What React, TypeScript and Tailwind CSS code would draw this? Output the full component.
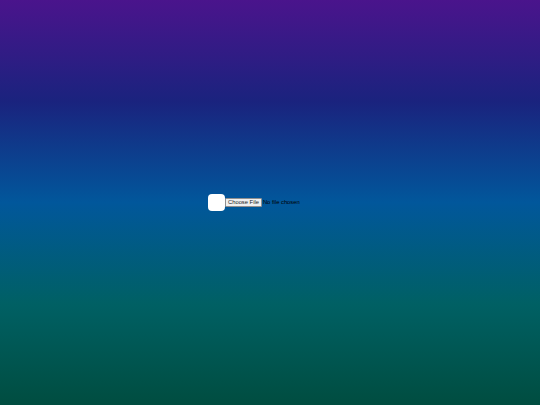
export default function App() {
  return (
    <div className="w-[540px] h-[405px] flex items-center justify-center bg-[linear-gradient(to_bottom,#4a148c_0%,#1a237e_25%,#01579b_50%,#006064_75%,#004d40_100%)]">
      <div className="flex items-center mr-[7px]">
        <div className="w-[17px] h-[17px] rounded-[4px] bg-white" />
        <input
          type="file"
          className="w-[100px] text-[5.8px] leading-none text-black font-['Liberation_Sans',sans-serif] file:mr-[1px] file:h-[9px] file:px-[2px] file:bg-[#efefef] file:text-[#222] file:border file:border-solid file:border-[#8f8f8f] file:rounded-[1px]"
        />
      </div>
    </div>
  );
}
